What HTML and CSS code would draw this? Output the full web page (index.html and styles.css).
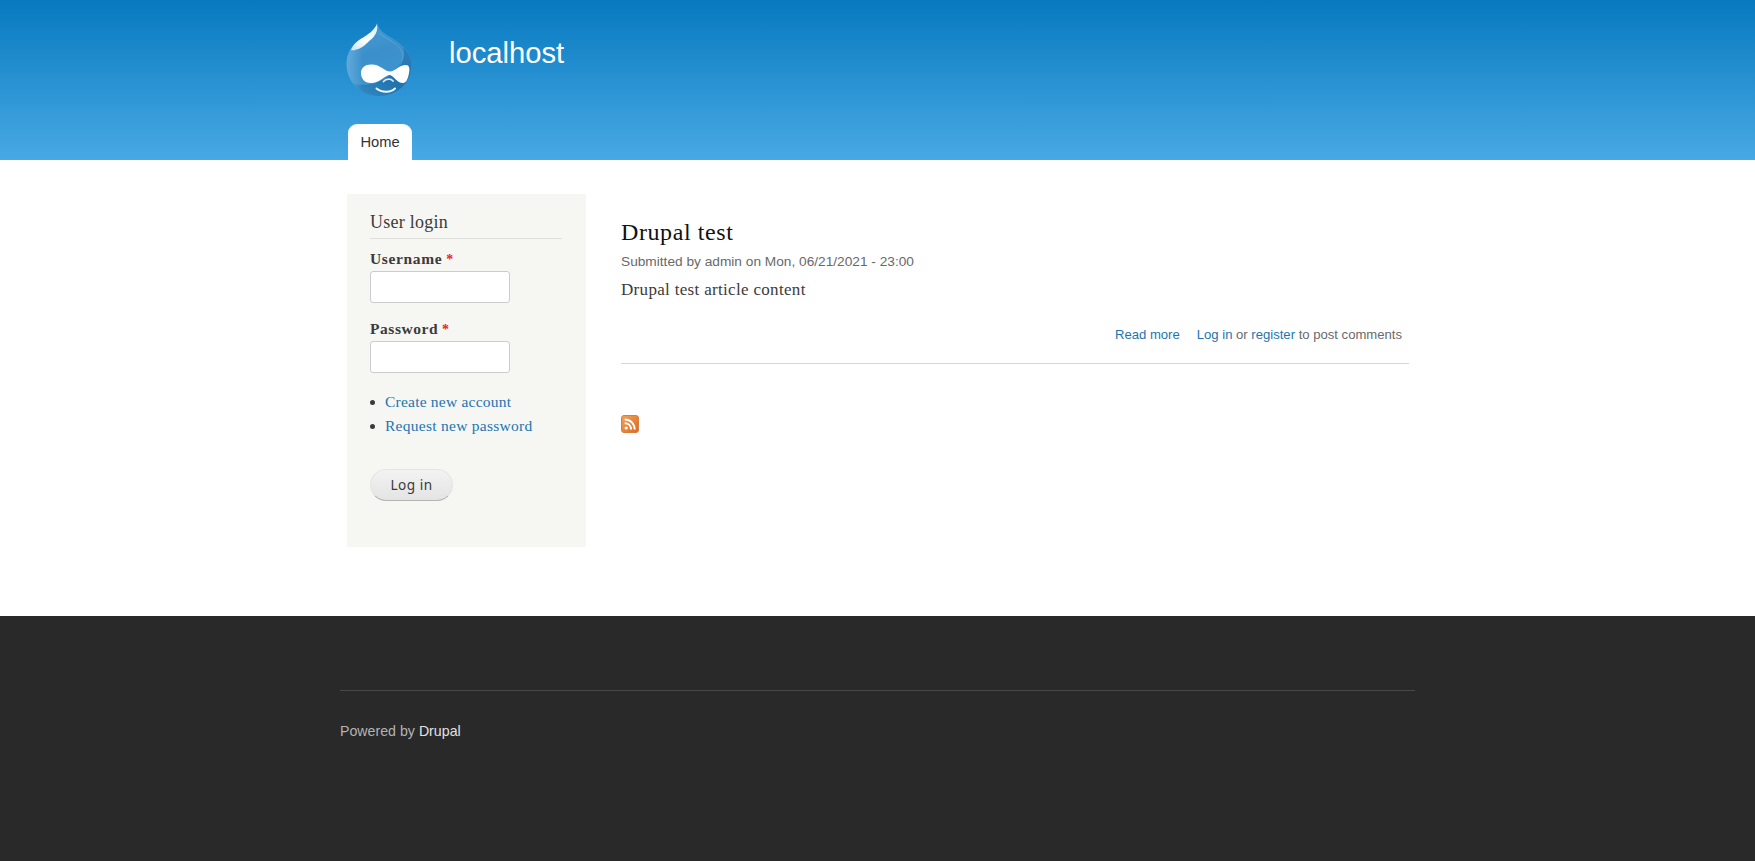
FILE: index.html
```html
<!DOCTYPE html>
<html lang="en">
<head>
<meta charset="utf-8">
<title>localhost</title>
<link rel="stylesheet" href="styles.css">
</head>
<body>
<header class="header">
  <div class="wrap header-inner">
    <div class="branding">
      <svg class="logo" viewBox="0 0 66 76" aria-label="Home">
        <defs>
          <linearGradient id="drop" x1="0" y1="0" x2="0.3" y2="1">
            <stop offset="0" stop-color="#4b9fd6"/>
            <stop offset="0.5" stop-color="#3b90ca"/>
            <stop offset="1" stop-color="#3f96cf"/>
          </linearGradient>
          <linearGradient id="shade" x1="1" y1="0" x2="0.2" y2="1">
            <stop offset="0" stop-color="#2a80bb"/>
            <stop offset="0.6" stop-color="#2173ae"/>
            <stop offset="1" stop-color="#3087c2"/>
          </linearGradient>
          <linearGradient id="shine" x1="1" y1="0" x2="0" y2="1">
            <stop offset="0" stop-color="#fff" stop-opacity=".8"/>
            <stop offset="0.55" stop-color="#fff"/>
            <stop offset="1" stop-color="#fff" stop-opacity=".7"/>
          </linearGradient>
          <linearGradient id="rim" x1="0" y1="0" x2="1" y2="0">
            <stop offset="0" stop-color="#8fc9ee" stop-opacity=".45"/>
            <stop offset="0.25" stop-color="#8fc9ee" stop-opacity="0"/>
          </linearGradient>
        </defs>
        <path fill="url(#drop)" d="M31 .5C33 9 39 12 46 16C59 24 65.500 32 65.500 43C65.500 62 50 74 33 74C15 74 .5 60 .5 42C.5 31 6 23 13 18C22 13 30 10 31 .5Z"/>
        <path fill="url(#shade)" d="M57 25C63 31 65.500 37 65.500 43C65.500 62 50 74 33 74C22 74 13 69 8 62C24 65 38 60 49 48C57 40 60 33 57 25Z"/>
        <path fill="url(#rim)" d="M31 .5C33 9 39 12 46 16C59 24 65.500 32 65.500 43C65.500 62 50 74 33 74C15 74 .5 60 .5 42C.5 31 6 23 13 18C22 13 30 10 31 .5Z"/>
        <path fill="none" stroke="#75b9e4" stroke-opacity=".5" stroke-width=".8" d="M33 11C37 15 43 17 48 21C58 28 60 37 52 46"/>
        <path fill="url(#shine)" d="M31 2C24 16 10 15 5 28C8 29 15 27 20 22C25 17 33 13 31 2Z"/>
        <path fill="#fff" d="M15 51C15 45 20 42 26 42.500C34 42.500 39 49.500 44 49.500C49 49.500 53 43 60 43C63 43 64 46 63 51C62 57 60 61 57 61C51 61 48 54 44 53C39 53 34 61 25 61C18 61 15 56 15 51Z"/>
        <path fill="none" stroke="#fff" stroke-opacity=".85" stroke-width="1.800" stroke-linecap="round" d="M37.500 59.500C40 56.500 45 56.500 47 59"/>
        <path fill="none" stroke="#fff" stroke-opacity=".95" stroke-width="2" stroke-linecap="round" d="M30.500 66.500C36 71 45 70.500 49 66.500"/>
      </svg>
      <div class="site-name">localhost</div>
    </div>
    <nav class="tab">Home</nav>
  </div>
</header>
<main class="wrap main">
  <aside class="sidebar">
    <h2 class="block-title">User login</h2>
    <form class="login">
      <label class="label" for="name"><span class="username">Username</span> <span class="required">*</span></label>
      <input class="field" id="name" type="text">
      <label class="label label-next" for="pass"><span class="password">Password</span> <span class="required">*</span></label>
      <input class="field" id="pass" type="password">
      <ul class="links">
        <li><a class="create">Create new account</a></li>
        <li><a class="request">Request new password</a></li>
      </ul>
      <button class="button" type="button">Log in</button>
    </form>
  </aside>
  <section class="content">
    <article class="node">
      <h2 class="title">Drupal test</h2>
      <div class="meta">Submitted by admin on Mon, 06/21/2021 - 23:00</div>
      <p class="body-text">Drupal test article content</p>
      <div class="node-links">
        <a>Read more</a>
        <span><a>Log in</a> or <a>register</a> to post comments</span>
      </div>
    </article>
    <svg class="feed" viewBox="0 0 18 18" aria-label="Feed">
      <defs>
        <linearGradient id="orange" x1="0" y1="0" x2="1" y2="1">
          <stop offset="0" stop-color="#f0a35d"/>
          <stop offset="1" stop-color="#dc6a22"/>
        </linearGradient>
      </defs>
      <rect x=".5" y=".5" width="17" height="17" rx="2.500" fill="url(#orange)" stroke="#db7d3d"/>
      <circle cx="5.200" cy="13" r="1.600" fill="#fff"/>
      <path fill="none" stroke="#fff" stroke-width="1.900" d="M3.700 8.300C7.500 8.300 10 10.800 10 14.500M3.700 4.500C9.500 4.500 13.700 8.700 13.700 14.500"/>
    </svg>
  </section>
</main>
<footer class="footer">
  <div class="wrap">
    <div class="powered">Powered by <a>Drupal</a></div>
  </div>
</footer>
</body>
</html>
```
FILE: styles.css
```css
* { box-sizing: border-box; }
body {
  margin: 0;
  min-height: 861px;
  display: flex;
  flex-direction: column;
  background: #fff;
  color: #3b3b3b;
  font-family: "Liberation Serif", serif;
}
h2, p, ul { margin: 0; padding: 0; font-weight: normal; }
a { color: #1b75b3; }
.wrap { width: 1075px; margin: 0 auto; }
.header {
  height: 160px;
  background: linear-gradient(#0779bf, #48a9e4);
  font-family: "Liberation Sans", sans-serif;
}
.header-inner {
  height: 160px;
  padding: 22px 0 0 5.5px;
  display: flex;
  flex-direction: column;
  justify-content: space-between;
}
.branding { display: flex; gap: 37.5px; }
.logo { width: 66px; height: 76px; }
.site-name {
  padding-top: 14px;
  color: #fffeff;
  font-size: 29.2px;
  line-height: 35px;
}
.tab {
  width: 64px;
  height: 36px;
  margin-left: 2.5px;
  border-radius: 9px 9px 0 0;
  background: #fff;
  color: #333;
  font-size: 14.7px;
  line-height: 36px;
  text-align: center;
}
.main {
  height: 456px;
  padding: 34px 6px 0 7px;
  display: flex;
  align-items: flex-start;
  gap: 35px;
}
.sidebar {
  width: 239px;
  height: 353px;
  padding: 16px 24px 0 23px;
  background: #f6f6f2;
}
.block-title {
  padding-bottom: 4px;
  border-bottom: 1px solid #dededa;
  font-size: 18px;
  line-height: 24px;
  letter-spacing: .25px;
}
.login { display: flex; flex-direction: column; align-items: flex-start; padding-top: 10px; }
.label {
  height: 20px;
  font-size: 15.5px;
  line-height: 20px;
  font-weight: bold;
}
.username { letter-spacing: .65px; }
.password { letter-spacing: .55px; }
.label-next { margin-top: 16px; }
.required { color: #e22; font-size: 14px; line-height: 0; }
.field {
  width: 140px;
  height: 32px;
  margin-top: 2px;
  border: 1px solid #ccc;
  border-radius: 3px;
  background: #fff;
}
.links {
  margin-top: 17px;
  list-style: none;
  font-size: 15.5px;
  line-height: 24px;
}
.links li { display: flex; align-items: center; }
.links li::before {
  content: "";
  width: 5px;
  height: 5px;
  margin-right: 10px;
  border-radius: 50%;
  background: #3b3b3b;
}
.create { letter-spacing: .22px; }
.request { letter-spacing: .27px; }
.button {
  width: 83px;
  height: 32px;
  margin-top: 31px;
  padding: 0 0 2px;
  border: 1px solid #e4e4e4;
  border-bottom-color: #b4b4b4;
  border-radius: 16px;
  background: linear-gradient(#f3f3f3, #e4e4e4);
  color: #3a3a3a;
  font-family: "Noto Sans", sans-serif;
  font-size: 13.6px;
  letter-spacing: .5px;
}
.content { flex: 1; }
.node { height: 170px; padding-top: 23px; border-bottom: 1px solid #d3d7d9; }
.title {
  color: #111;
  font-size: 24px;
  line-height: 30px;
  letter-spacing: .6px;
}
.meta {
  margin-top: 5px;
  color: #68696b;
  font: 13.7px/20px "Liberation Sans", sans-serif;
}
.body-text {
  margin-top: 6px;
  font-size: 17px;
  line-height: 24px;
  letter-spacing: .32px;
}
.node-links {
  display: flex;
  justify-content: flex-end;
  gap: 17px;
  margin-top: 23px;
  padding-right: 7px;
  color: #68696b;
  font: 13.1px/20px "Liberation Sans", sans-serif;
}
.feed { display: block; width: 18px; height: 18px; margin-top: 51px; }
.footer {
  flex: 1;
  padding-top: 74px;
  background: #292929;
  font-family: "Liberation Sans", sans-serif;
}
.powered {
  padding-top: 30px;
  border-top: 1px solid #484848;
  color: #b3b3b3;
  font-size: 14.2px;
  line-height: 20px;
}
.powered a { color: #e2e2e2; }
```
